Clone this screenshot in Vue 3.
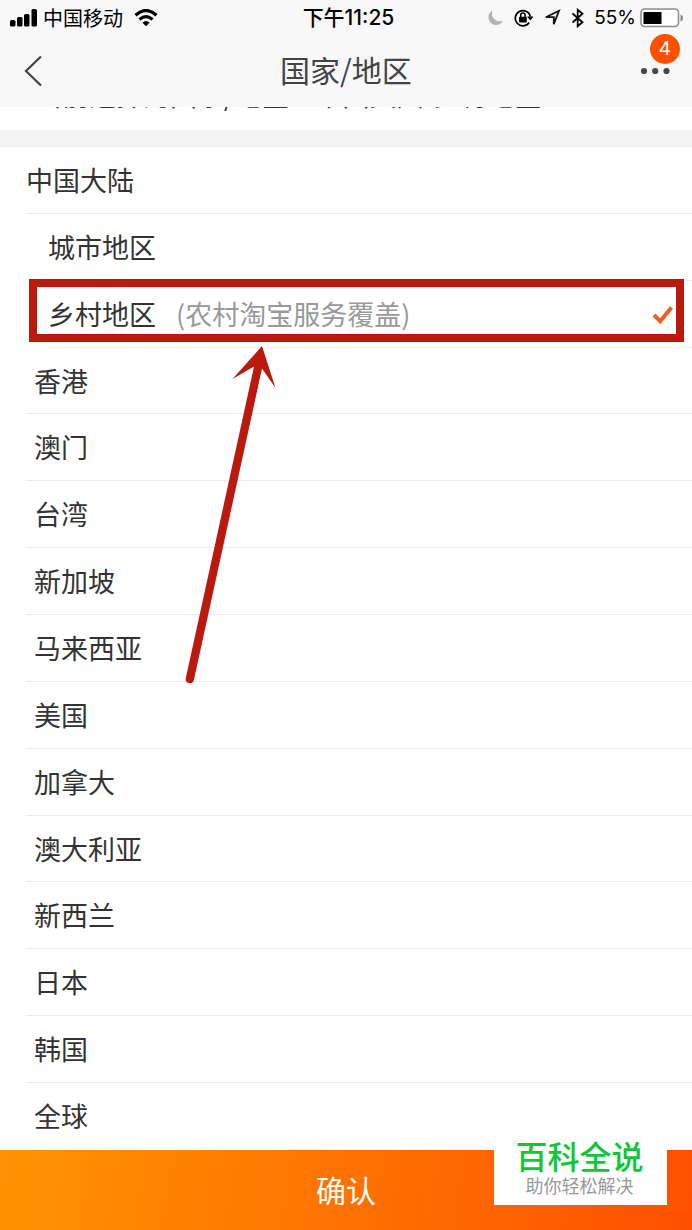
<script setup>
import { ref } from 'vue'

const places = [
  { name: '中国大陆', level: 'top' },
  { name: '城市地区', level: 'sub' },
  { name: '乡村地区', level: 'sub', note: '(农村淘宝服务覆盖)' },
  { name: '香港' },
  { name: '澳门' },
  { name: '台湾' },
  { name: '新加坡' },
  { name: '马来西亚' },
  { name: '美国' },
  { name: '加拿大' },
  { name: '澳大利亚' },
  { name: '新西兰' },
  { name: '日本' },
  { name: '韩国' },
  { name: '全球' }
]
const selected = ref('乡村地区')
</script>

<template>
  <div class="page">
    <header class="header">
      <div class="status">
        <div class="status-left">
          <svg width="27" height="18" viewBox="0 0 27 18" aria-hidden="true">
            <rect x="0" y="11" width="5.500" height="6.500" rx="1.500" />
            <rect x="7" y="8" width="5.500" height="9.500" rx="1.500" />
            <rect x="14" y="5" width="5.500" height="12.500" rx="1.500" />
            <rect x="21.500" y="0" width="5.500" height="17.500" rx="1.500" />
          </svg>
          <span class="carrier">中国移动</span>
          <svg class="wifi" width="24" height="18" viewBox="0 0 24 18" aria-hidden="true">
            <path d="M1.500 6.200Q12 -3.200 22.500 6.200" fill="none" stroke="#000" stroke-width="3.200" />
            <path d="M5.500 10.500Q12 4.800 18.500 10.500" fill="none" stroke="#000" stroke-width="3" />
            <path d="M8.300 13.600Q12 10.200 15.700 13.600L12 17.300Z" />
          </svg>
        </div>
        <div class="time">下午11:25</div>
        <div class="status-right">
          <svg width="16" height="16" viewBox="0 0 16 16" aria-hidden="true">
            <path d="M4.500 0.500C1.500 2 0 5 0.600 8.500C1.500 13 5 15.500 9 15C11.800 14.700 14 13 15 10.800C11.500 12 8 11.200 6 8.800C4 6.500 3.400 3.500 4.500 0.500Z" fill="#b2b2b2" />
          </svg>
          <svg class="lock" width="20" height="18" viewBox="0 0 20 18" aria-hidden="true">
            <path d="M15.200 13.500A7.600 7.600 0 1 1 16.300 7.500" fill="none" stroke="#000" stroke-width="1.700" />
            <path d="M13 7.500H19.500L16.300 11.500Z" />
            <rect x="5" y="7.800" width="7.800" height="5.600" rx="0.800" />
            <path d="M6.700 8.500V6.300A2.200 2.200 0 0 1 11.100 6.300V8.500" fill="none" stroke="#000" stroke-width="1.500" />
          </svg>
          <svg class="locate" width="17" height="17" viewBox="0 0 17 17" aria-hidden="true">
            <path d="M1.800 8.200L15 1.800L9.800 15.200V8.200Z" fill="none" stroke="#111" stroke-width="1.800" />
          </svg>
          <svg class="bluetooth" width="14" height="20" viewBox="0 0 14 20" aria-hidden="true">
            <path d="M1.500 5.500L11.500 14.200L6.700 18.200V1.800L11.500 5.800L1.500 14.500" fill="none" stroke="#000" stroke-width="1.800" />
          </svg>
          <span class="percent">55%</span>
          <svg class="battery" width="44" height="20" viewBox="0 0 44 20" aria-hidden="true">
            <rect x="1" y="1" width="37.500" height="17.500" rx="3.500" fill="#fff" stroke="#8c8c8c" stroke-width="1.500" />
            <rect x="3.500" y="4" width="18" height="12" />
            <path d="M40.500 6.500Q43 7 43 10Q43 13 40.500 13.500Z" fill="#8c8c8c" />
          </svg>
        </div>
      </div>
      <nav class="nav">
        <button class="back" type="button" aria-label="返回">
          <svg width="20" height="32" viewBox="0 0 20 32"><path d="M18 1.500L3 16L18 30.500" fill="none" stroke="#444" stroke-width="2.200" /></svg>
        </button>
        <h1>国家/地区</h1>
        <button class="more" type="button" aria-label="更多">
          <svg width="30" height="8" viewBox="0 0 30 8" fill="#484848"><circle cx="4" cy="4" r="3.100" /><circle cx="15.200" cy="4" r="3.100" /><circle cx="26.500" cy="4" r="3.100" /></svg>
          <span class="badge">4</span>
        </button>
      </nav>
    </header>

    <div class="current"><p>当前选择的国家/地区：中国大陆-乡村地区</p></div>

    <ul class="list">
      <li v-for="p in places" :key="p.name" :class="p.level">
        <button type="button" class="row" :aria-pressed="selected === p.name" @click="selected = p.name">
          <span>{{ p.name }}</span>
          <span v-if="p.note" class="note">{{ p.note }}</span>
          <svg v-if="selected === p.name" class="check" width="22" height="20" viewBox="0 0 22 20" aria-hidden="true">
            <path d="M2 11L8.200 17.200L19.500 3.500" fill="none" stroke="#ee5f22" stroke-width="4" />
          </svg>
        </button>
        <template v-if="p.note">
          <div class="frame"></div>
          <svg class="arrow" width="92" height="342" viewBox="0 0 92 342" aria-hidden="true">
            <path d="M77 1L90.500 43L77 23.500L8.800 335.500A4.200 4.200 0 0 1 0.700 333.500L69 21.500L47.500 34Z" fill="#b91a0d" />
          </svg>
        </template>
      </li>
    </ul>

    <footer class="footer">
      <button class="confirm" type="button">确认</button>
      <div class="brand">
        <strong>百科全说</strong>
        <span>助你轻松解决</span>
      </div>
    </footer>
  </div>
</template>

<style>
body {
  margin: 0;
  background: #fff;
}
</style>

<style scoped>
.page {
  display: flex;
  flex-direction: column;
  min-height: 100vh;
  background: #fff;
  color: #333;
  font-family: "Noto Sans CJK SC", sans-serif;
}
button {
  margin: 0;
  padding: 0;
  border: 0;
  background: none;
  color: inherit;
  font: inherit;
  cursor: pointer;
}
svg {
  display: block;
  flex: none;
}
.header {
  background: #f8f8f8;
}
.status {
  display: grid;
  grid-template-columns: 1fr auto 1fr;
  align-items: center;
  height: 35px;
  padding: 0 8px 0 10px;
  color: #000;
}
.status-left,
.status-right {
  display: flex;
  align-items: center;
}
.status-right {
  justify-content: flex-end;
}
.carrier {
  margin: 0 11px 0 6px;
  font-size: 20px;
  line-height: 28px;
}
.time {
  padding-left: 3px;
  font-family: Inter, "Noto Sans CJK SC", sans-serif;
  font-size: 21px;
  font-weight: 500;
  line-height: 28px;
}
.lock,
.locate,
.bluetooth {
  margin-left: 10px;
}
.percent {
  margin: 0 4px 0 9px;
  font-family: Inter, sans-serif;
  font-size: 19px;
}
.nav {
  display: grid;
  grid-template-columns: 80px 1fr 80px;
  align-items: center;
  height: 72px;
}
.nav h1 {
  margin: 0;
  padding-bottom: 4px;
  font-size: 30px;
  font-weight: 400;
  line-height: 40px;
  text-align: center;
  color: #444;
}
.back {
  padding-left: 23px;
}
.more {
  position: relative;
  justify-self: end;
  margin-right: 22px;
}
.badge {
  position: absolute;
  right: -10px;
  bottom: 11px;
  width: 30px;
  height: 30px;
  border-radius: 50%;
  background: #ff5000;
  color: #fff;
  font-family: Inter, sans-serif;
  font-size: 19px;
  line-height: 30px;
  text-align: center;
}
.current {
  display: flex;
  align-items: flex-end;
  height: 23px;
  padding-left: 35px;
  overflow: hidden;
  border-bottom: 17px solid #f3f3f3;
}
.current p {
  flex: none;
  margin: 0;
  padding-bottom: 22px;
  font-size: 27px;
  line-height: 27px;
  white-space: nowrap;
}
.list {
  display: flex;
  flex: 1;
  flex-direction: column;
  margin: 0;
  padding: 0;
  list-style: none;
}
.list li {
  position: relative;
  display: flex;
  flex: 1 0 60px;
  padding-left: 26px;
}
.list li.sub {
  padding-left: 48px;
}
.row {
  display: flex;
  flex: 1;
  align-items: center;
  padding: 0 18px 0 8px;
  border-bottom: 1px solid #ebebeb;
  font-size: 27px;
  line-height: 36px;
  text-align: left;
}
.top .row,
.sub .row {
  padding-left: 0;
}
.list li:last-child .row {
  border-bottom: 0;
}
.note {
  margin-left: 20px;
  color: #999;
}
.check {
  margin-left: auto;
}
.frame {
  position: absolute;
  inset: -2px 8px 6px 29px;
  border: 8px solid #b91a0d;
  pointer-events: none;
}
.arrow {
  position: absolute;
  z-index: 1;
  top: 64px;
  left: 185px;
  pointer-events: none;
}
.footer {
  position: relative;
}
.confirm {
  display: block;
  width: 100%;
  height: 80px;
  padding-bottom: 2px;
  background: linear-gradient(100deg, #ff9402, #ff5000);
  color: #fff;
  font-size: 30px;
}
.brand {
  position: absolute;
  right: 25px;
  bottom: 25px;
  display: flex;
  flex-direction: column;
  align-items: center;
  width: 171px;
  height: 68px;
  padding-right: 2px;
  background: #fff;
}
.brand strong {
  color: #0fc73c;
  font-size: 32px;
  font-weight: 500;
  line-height: 36px;
}
.brand span {
  color: #999;
  font-size: 18px;
  line-height: 24px;
}
</style>
